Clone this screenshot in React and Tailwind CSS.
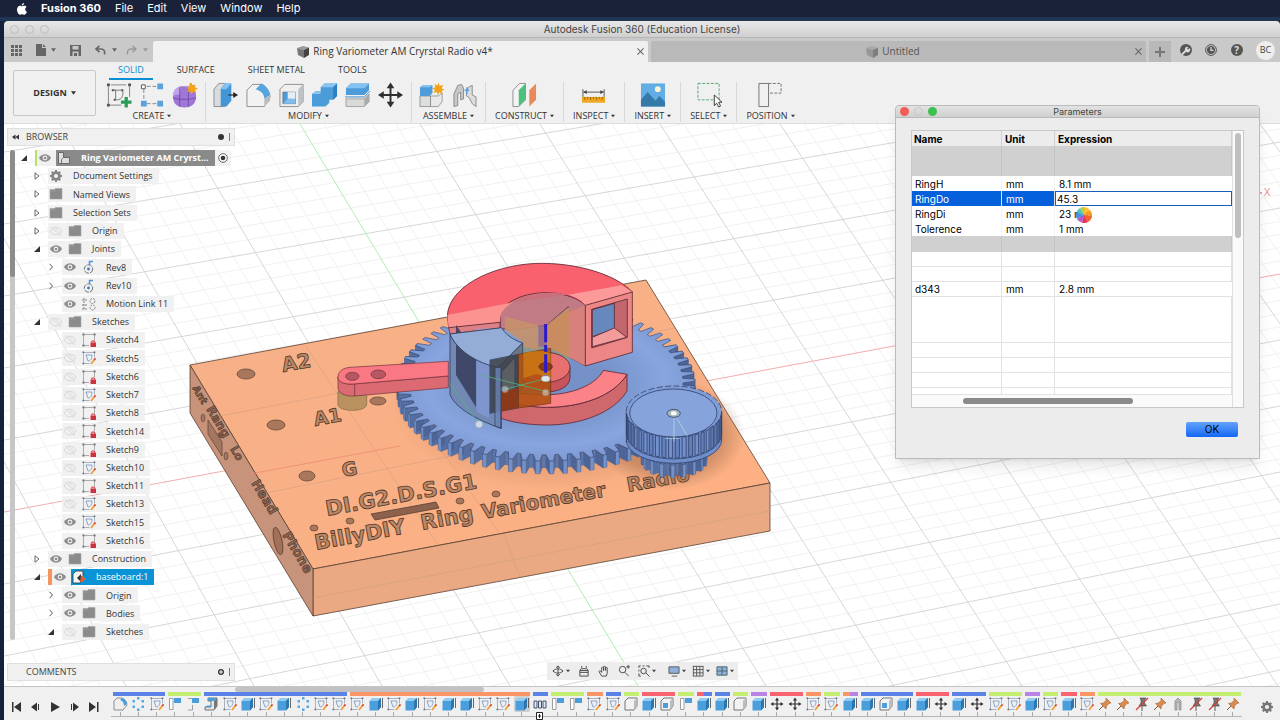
import React, { useState } from 'react';

const COLORS = {
  blue: 'bg-[#5b82e6]',
  lime: 'bg-[#c3ee70]',
  orange: 'bg-[#fb9565]',
  red: 'bg-[#f8636f]',
  purple: 'bg-[#b983e6]',
  redBlue: 'bg-linear-to-r from-[#f8636f] from-50% to-[#5b82e6] to-50%',
  orangePurple: 'bg-linear-to-r from-[#fb9565] from-50% to-[#b983e6] to-50%',
};

const TIMELINE = [
  { color: 'blue', items: ['fillet', 'pattern', 'sketch'] },
  { color: 'lime', items: ['joint', 'jointAlt'] },
  { color: 'blue', items: ['sweep', 'sketch', 'extrude', 'sketch', 'extrude', 'pattern', 'sketch', 'sketch'] },
  { color: 'orange', items: ['sketch', 'extrude', 'sketch', 'extrude', 'sketch', 'extrude', 'extrude', 'sketch', 'sketch', 'extrudeActive'] },
  { color: 'blue', items: ['linear'] },
  { color: 'lime', items: ['joint', 'joint'] },
  { color: 'orange', items: ['sketch'] },
  { color: 'blue', items: ['sketch'] },
  { color: 'lime', items: ['body'] },
  { color: 'red', items: ['extrude', 'shell'] },
  { color: 'lime', items: ['joint'] },
  { color: 'redBlue', items: ['extrude'] },
  { color: 'blue', items: ['extrude'] },
  { color: 'lime', items: ['body'] },
  { color: 'purple', items: ['extrude'] },
  { color: 'red', items: ['move', 'move'] },
  { color: 'orange', items: ['sketch'] },
  { color: 'lime', items: ['sketch'] },
  { color: 'orangePurple', items: ['extrude'] },
  { color: 'blue', items: ['extrude', 'shell', 'extrude'] },
  { color: 'red', items: ['extrude', 'move'] },
  { color: 'blue', items: ['extrude', 'move'] },
  { color: 'lime', items: ['sketch', 'sketch'] },
  { color: 'purple', items: ['extrude'] },
  { color: 'lime', items: ['sketch'] },
  { color: 'red', items: ['extrude'] },
  { color: 'orange', items: ['sketch'] },
  { color: 'lime', items: ['pin', 'pin', 'pinOff', 'pin', 'clip', 'pinOff', 'pinOff', 'pin'] },
];

const TREE = [
  { label: 'Ring Variometer AM Cryrst...', depth: 0, arrow: 'open', eye: 'on', icon: 'component', root: true },
  { label: 'Document Settings', depth: 1, arrow: 'closed', icon: 'gear' },
  { label: 'Named Views', depth: 1, arrow: 'closed', icon: 'folder' },
  { label: 'Selection Sets', depth: 1, arrow: 'closed', icon: 'folder' },
  { label: 'Origin', depth: 1, arrow: 'closed', eye: 'off', icon: 'folder' },
  { label: 'Joints', depth: 1, arrow: 'open', eye: 'on', icon: 'folder' },
  { label: 'Rev8', depth: 2, arrow: 'thin', eye: 'on', icon: 'rev' },
  { label: 'Rev10', depth: 2, arrow: 'thin', eye: 'on', icon: 'rev' },
  { label: 'Motion Link 11', depth: 2, eye: 'on', icon: 'link' },
  { label: 'Sketches', depth: 1, arrow: 'open', eye: 'off', icon: 'folder' },
  { label: 'Sketch4', depth: 2, eye: 'off', icon: 'locked' },
  { label: 'Sketch5', depth: 2, eye: 'off', icon: 'sketch' },
  { label: 'Sketch6', depth: 2, eye: 'off', icon: 'locked' },
  { label: 'Sketch7', depth: 2, eye: 'off', icon: 'sketch' },
  { label: 'Sketch8', depth: 2, eye: 'off', icon: 'locked' },
  { label: 'Sketch14', depth: 2, eye: 'off', icon: 'locked' },
  { label: 'Sketch9', depth: 2, eye: 'off', icon: 'locked' },
  { label: 'Sketch10', depth: 2, eye: 'off', icon: 'sketch' },
  { label: 'Sketch11', depth: 2, eye: 'off', icon: 'locked' },
  { label: 'Sketch13', depth: 2, eye: 'off', icon: 'sketch' },
  { label: 'Sketch15', depth: 2, eye: 'on', icon: 'sketch' },
  { label: 'Sketch16', depth: 2, eye: 'on', icon: 'locked' },
  { label: 'Construction', depth: 1, arrow: 'closed', eye: 'on', icon: 'folder' },
  { label: 'baseboard:1', depth: 1, arrow: 'open', eye: 'on', icon: 'part', selected: true },
  { label: 'Origin', depth: 2, arrow: 'thin', eye: 'on', icon: 'folder' },
  { label: 'Bodies', depth: 2, arrow: 'thin', eye: 'on', icon: 'folder' },
  { label: 'Sketches', depth: 2, arrow: 'open', eye: 'off', icon: 'folder' },
];

const INDENT = ['pl-[2px]', 'pl-[15px]', 'pl-[29px]'];

const RIBBON = [
  { label: 'CREATE', icons: ['newSketch', 'pointPattern', 'form'] },
  { label: 'MODIFY', icons: ['pressPull', 'filletBig', 'shellBig', 'combine', 'split', 'moveBig'] },
  { label: 'ASSEMBLE', icons: ['newComponent', 'jointBig'] },
  { label: 'CONSTRUCT', icons: ['plane'] },
  { label: 'INSPECT', icons: ['measure'] },
  { label: 'INSERT', icons: ['picture'] },
  { label: 'SELECT', icons: ['select'] },
  { label: 'POSITION', icons: ['position'] },
];

const Caret = ({ className = 'w-[5px] h-[4px]' }) => (
  <svg className={className} viewBox="0 0 6 4" fill="currentColor">
    <path d="M0 0h6L3 4z" />
  </svg>
);

const GEAR_PATH =
  'M6.8 0h2.4l.4 2 1.5.6L12.8 1.5l1.7 1.7-1.1 1.7.6 1.5 2 .4v2.4l-2 .4-.6 1.5 1.1 1.7-1.7 1.7-1.7-1.1-1.5.6-.4 2H6.8l-.4-2-1.5-.6-1.7 1.1-1.7-1.7 1.1-1.7L2 9.6l-2-.4V6.8l2-.4.6-1.500L1.500 3.200l1.700-1.700 1.700 1.100L6.400 2zM8 5.200a2.800 2.800 0 100 5.600 2.800 2.800 0 000-5.600z';

const GearIcon = ({ className }) => (
  <svg className={className} viewBox="0 0 16 16" fill="currentColor">
    <path fillRule="evenodd" d={GEAR_PATH} />
  </svg>
);

/* ---------- ribbon icons ---------- */

const ribbonDrawings = {
  newSketch: (
    <g fill="none" stroke="#777">
      <path d="M2.500 4v18M4 23.500h12M5 2.500h16M24.500 4v11" strokeWidth=".9" />
      <path d="M7 8h10c2 5-1 10-5 10H9M7 8h3v9" strokeWidth="1" />
      <path d="M1 1h3v3H1zM23 1h3v3h-3zM1 22h3v3H1zM6 7h2v2H6zM16 7h2v2h-2zM8 17h2v2H8z" fill="#555" stroke="none" />
      <path d="M21 15v11M15.500 20.500h11" stroke="#2a9d58" strokeWidth="3.400" />
    </g>
  ),
  pointPattern: (
    <g>
      <path d="M5 7v12M8 4h10M8 22h10" stroke="#888" strokeDasharray="4 2" fill="none" />
      <path d="M2.500 2.500h4v4h-4z" fill="#fff" stroke="#555" />
      <path d="M19 1h6v6h-6zM2 19h6v6H2zM19 19h6v6h-6z" fill="#5aa2dc" />
    </g>
  ),
  form: (
    <g>
      <path d="M1 15c0-6 3-9 8-11h8c6 2 8 5 8 11 0 6-4 11-12 11S1 21 1 15z" fill="#a077d6" />
      <path d="M1 14c2-1 4-1.500 7-1l1-9C4 5 1 9 1 14z" fill="#c3a3ec" />
      <path d="M8 5v20M1 16c5 2 18 2 24 0M17 5v20" stroke="#6f48a8" fill="none" strokeWidth=".9" />
      <path d="M20 0l1.500 3 3-1-.8 3 3.300 1.200-3 1.700 1 3-3-1.200-2 2.800-1-3.200-3.200.6 1.400-3L15 5.200l3.200-.7-.4-3z" fill="#f0a316" />
    </g>
  ),
  pressPull: (
    <g>
      <path d="M1 7l5-6h6v24H1z" fill="#d9dcdf" stroke="#6a6a6a" strokeWidth=".7" />
      <path d="M8 7l4-6h7v18l-5 6H8z" fill="#4296d6" />
      <path d="M8 7l4-6h7l-5 6z" fill="#85c1ee" />
      <path d="M16 13h6" stroke="#222" strokeWidth="1.200" />
      <path d="M21 10l5 3-5 3z" fill="#222" />
    </g>
  ),
  filletBig: (
    <g>
      <path d="M1 8l6-6h9c5 2 9 8 9 13l-6 10H1z" fill="#f2f2f2" stroke="#777" strokeWidth=".8" />
      <path d="M10 7l6-6c5 2 8 7 9 12l-6 4c0-5-3-8-9-10z" fill="#56a5de" />
      <path d="M19 17l6-4v6l-6 6z" fill="#b9bcbf" />
    </g>
  ),
  shellBig: (
    <g>
      <path d="M1 7l5-5h19v18l-5 5H1z" fill="#f0f0f0" stroke="#777" strokeWidth=".8" />
      <path d="M20 7l5-5v18l-5 5z" fill="#bfc2c5" />
      <path d="M4 10h13v12H4z" fill="#4d9cda" stroke="#555" strokeWidth=".6" />
      <path d="M9 10h8v7H9z" fill="#e6eef5" />
      <path d="M4 22l5-5h8v5z" fill="#80bdec" />
    </g>
  ),
  combine: (
    <g>
      <path d="M9 5l4-4h13v13l-4 4h-4v3l-4 4H0V12l4-3h5z" fill="#4d9cda" />
      <path d="M9 5l4-4h13l-4 4zM0 12l4-3h5v3z" fill="#8ac5f0" />
      <path d="M22 5l4-4v13l-4 4z" fill="#2f7fc0" />
    </g>
  ),
  split: (
    <g>
      <path d="M1 6l5-5h19v7l-5 5H1z" fill="#4d9cda" />
      <path d="M1 6l5-5h19l-5 5z" fill="#86c2ef" />
      <path d="M0 15h20l6-6" stroke="#3a8ac9" fill="none" />
      <path d="M1 17h19l5-5v8l-5 5H1z" fill="#d9dad8" stroke="#888" strokeWidth=".7" />
      <path d="M20 17l5-5v8l-5 5z" fill="#a9acab" />
    </g>
  ),
  moveBig: (
    <g fill="#2f2f2f">
      <path d="M12 5h2v16h-2zM5 12h16v2H5z" />
      <path d="M13 0l4 6H9zM13 26l4-6H9zM0 13l6-4v8zM26 13l-6-4v8z" />
    </g>
  ),
  newComponent: (
    <g>
      <path d="M1 14h11v11H1z" fill="#dcdddd" stroke="#777" strokeWidth=".7" />
      <path d="M12 14h8l4-3v9l-4 5h-8z" fill="#e9e9e9" stroke="#777" strokeWidth=".7" />
      <path d="M1 5l3-2h10v8l-3 3H1z" fill="#4d9cda" />
      <path d="M1 5l3-2h10l-3 2z" fill="#8ac5f0" />
      <path d="M20 0l1.500 3.500 3.500-1-1.500 3.500 3 1.500-3 1 1 3.500-3.200-1.800L19.500 13l-1-3.200-3.500 1 1.500-3.200-3-1.600 3.500-1-.8-3.500 3 1.700z" fill="#f0a316" />
    </g>
  ),
  jointBig: (
    <g stroke="#777" strokeWidth=".8">
      <path d="M2 12l4-9 4-1 2 4v11l-3 1V10l-3 2v12l-4 1z" fill="#c6c8ca" />
      <path d="M15 14V9l2-4 4-2v10l4 2v10l-4-3-3-6z" fill="#dcdedf" />
      <path d="M13 8h5M15.500 5v7" stroke="#4d9cda" strokeWidth="1.400" />
    </g>
  ),
  plane: (
    <g>
      <path d="M1 8l7-7h6v17l-7 7H1z" fill="#f3f3f3" stroke="#777" strokeWidth=".8" />
      <path d="M7 8l7-7v17l-7 7z" fill="#4cc07c" />
      <path d="M18 8l7-7v17l-7 7z" fill="#e8895a" />
    </g>
  ),
  measure: (
    <g>
      <path d="M2 7v8M24 7v8M3 10h20" stroke="#555" fill="none" />
      <path d="M2 10l4-2v4zM24 10l-4-2v4z" fill="#444" />
      <path d="M1 15h24v6H1z" fill="#efa51f" />
      <path d="M4 15v3M7 15v2M10 15v3M13 15v2M16 15v3M19 15v2M22 15v3" stroke="#7d5200" strokeWidth=".8" />
    </g>
  ),
  picture: (
    <g>
      <path d="M1 1h25v24H1z" fill="#62ade6" />
      <circle cx="18.500" cy="7" r="3" fill="#fdf3d3" />
      <path d="M1 18l7-8 8 9 4-5 6 6v5H1z" fill="#3579a8" />
    </g>
  ),
  select: (
    <g>
      <path d="M2 1h22v17H2z" fill="none" stroke="#43a06c" strokeWidth=".9" strokeDasharray="3 1.500" />
      <path d="M19 13v11l2.500-2.500 2 4 2-1-2-4H27z" fill="#fff" stroke="#222" strokeWidth=".9" />
    </g>
  ),
  position: (
    <g fill="none" stroke="#666" strokeWidth=".9">
      <path d="M2 1h10v24H2z" />
      <path d="M12 1h13v10H12" strokeDasharray="3 1.500" />
    </g>
  ),
};

const RibbonIcon = ({ name }) => (
  <svg className="w-[26px] h-[26px]" viewBox="0 0 27 26">
    {ribbonDrawings[name]}
  </svg>
);

/* ---------- 16px icons shared by the browser tree and the timeline ---------- */

const smallDrawings = {
  folder: <path d="M2 3.500h4.500l1-1H14V13H2zM2 5h6" fill="#8b8b8b" stroke="#a5a5a5" strokeWidth=".6" />,
  component: (
    <g fill="#ddd" stroke="#555" strokeWidth=".8">
      <path d="M2.500 2.500h5v5h6v6h-11z" />
      <path d="M7.500 7.500l-2 2v4" fill="none" />
    </g>
  ),
  part: (
    <g>
      <path d="M2 5l3-3h7v8l-3 4H2z" fill="#f4f4f4" stroke="#333" strokeWidth=".8" />
      <path d="M10 5v8l-4-4z" fill="#333" />
      <path d="M10 7h3v2h2v2h-2v2H9z" fill="#d8603a" />
    </g>
  ),
  rev: (
    <g fill="none">
      <circle cx="7.500" cy="10" r="4.200" stroke="#666" strokeWidth=".9" strokeDasharray="5 1" />
      <circle cx="7.500" cy="10" r="1.400" fill="#3c78c8" />
      <path d="M8.500 6V2.500h3.500" stroke="#4f97dc" strokeWidth="1.500" />
    </g>
  ),
  link: (
    <g fill="none" stroke="#777" strokeWidth=".9" strokeDasharray="2 1">
      <path d="M3 2v12M6 4H1M6 9H1M6 13H1" />
      <circle cx="11.500" cy="5" r="2.500" />
      <circle cx="11.500" cy="11.500" r="2.500" />
    </g>
  ),
  locked: (
    <g>
      <path d="M2.500 12V4M4 2.500h8M13.500 4v4M4 13.500h4" fill="none" stroke="#999" strokeWidth=".8" />
      <path d="M1.500 1.500h2v2h-2zM12.500 1.500h2v2h-2zM1.500 12.500h2v2h-2z" fill="#666" />
      <path d="M9.500 10.500h5.500V15H9.500z" fill="#cc3340" />
      <path d="M10.800 10.500V9h2.800v1.500" fill="none" stroke="#cc3340" />
    </g>
  ),
  sketch: (
    <g fill="none">
      <path d="M2.500 2.500h11v5M2.500 2.500v11h6" stroke="#96a5b8" strokeWidth=".8" />
      <path d="M5 5h6c0 4-1.500 6-4 6M5 5l2 6" stroke="#6d93c2" strokeWidth=".8" />
      <path d="M1.500 1.500h1.600v1.600H1.500zM12.700 1.500h1.600v1.600h-1.600zM1.500 12.700h1.600v1.600H1.500z" fill="#667" />
      <path d="M10 14l3.500-4.500" stroke="#f0a03a" strokeWidth="1.900" />
      <path d="M13.200 10l1.300-1.600" stroke="#cf4a34" strokeWidth="1.800" />
    </g>
  ),
  extrude: (
    <g>
      <path d="M1.500 5l3-3H13v9l-3 3.500H1.500z" fill="#4a9edb" />
      <path d="M1.500 5l3-3H13l-3 3z" fill="#93ccf3" />
      <path d="M10 5l3-3v9l-3 3.500z" fill="#2c75ad" />
      <path d="M14.500 2v10" stroke="#444" strokeWidth=".8" />
    </g>
  ),
  body: (
    <g>
      <path d="M2 5l3-3h9v8l-3 4H2z" fill="#f2f2f2" stroke="#666" strokeWidth=".9" />
      <path d="M11 5l3-3v8l-3 4z" fill="#bcbcbc" />
    </g>
  ),
  shell: (
    <g>
      <path d="M2 5l3-3h9v8l-3 4H2z" fill="#f2f2f2" stroke="#666" strokeWidth=".9" />
      <path d="M11 5l3-3v8l-3 4z" fill="#bcbcbc" />
      <path d="M4 7h5v5H4z" fill="#4a9edb" />
    </g>
  ),
  fillet: (
    <g>
      <path d="M2 5l3-3h5c3 1 5 4 5 7l-4 5H2z" fill="#eee" stroke="#777" strokeWidth=".8" />
      <path d="M8 4l2-2c3 1 5 4 5 6l-3 2c0-3-1-5-4-6z" fill="#4a9edb" />
    </g>
  ),
  sweep: (
    <g>
      <path d="M5 2h9v8l-3 4H2v-3h6V5H5z" fill="#e7e7e7" stroke="#555" strokeWidth=".8" />
      <path d="M5 2h9l-3 3H5zM2 11l2-1.500h4V11z" fill="#4a9edb" />
      <path d="M11 5l3-3v8l-3 4z" fill="#777" />
    </g>
  ),
  pattern: (
    <g fill="#5aa6de">
      <path d="M7 1h2.500v2.500H7zM7 12.500h2.500V15H7zM2.500 4H5v2.500H2.500zM11.500 4H14v2.500h-2.500zM2.500 9.500H5V12H2.500zM11.500 9.500H14V12h-2.500z" />
    </g>
  ),
  linear: <path d="M2 5h3v7H2zM6.500 5h3v7h-3zM11 5h3v7h-3z" fill="#dfe9f5" stroke="#33415e" strokeWidth=".9" />,
  joint: (
    <g>
      <path d="M2.500 2.500h3.500v11H2.500z" fill="#fff" stroke="#888" strokeWidth=".8" />
      <path d="M7 2h7v5H7z" fill="#4a9edb" />
    </g>
  ),
  jointAlt: (
    <g>
      <path d="M3 2.500h4M7.500 9v5H3" fill="none" stroke="#888" strokeWidth=".8" />
      <path d="M7 2h7v5H7z" fill="#4a9edb" />
    </g>
  ),
  move: (
    <g fill="#2f2f2f">
      <path d="M7.400 3h1.200v10H7.400zM3 7.400h10v1.200H3z" />
      <path d="M8 1.500l2 3H6zM8 14.500l2-3H6zM1.500 8l3-2v4zM14.500 8l-3-2v4z" />
    </g>
  ),
  pin: (
    <g>
      <path d="M9 2l5 5-2 .5-2.500 2.500L9 13 3.500 7.500l3-.5L9 4.500z" fill="#d98a4e" stroke="#a5622d" strokeWidth=".6" />
      <path d="M6 10l-4 4" stroke="#7a5636" />
    </g>
  ),
  pinOff: (
    <g>
      <path d="M6 2h6l-1.500 2v3l2 3H5l2-3V4z" fill="#777" stroke="#444" strokeWidth=".6" />
      <path d="M8 10v5" stroke="#555" />
      <path d="M2 14L14 2" stroke="#c94434" strokeWidth="1.200" />
    </g>
  ),
  clip: <path d="M5 14V5l3-3 3 3v9H9V6H7v8z" fill="#bbb" stroke="#888" strokeWidth=".8" />,
};

const SmallIcon = ({ name }) => {
  if (name === 'gear') return <GearIcon className="w-4 h-3 shrink-0 text-[#858585]" />;
  return (
    <svg className="w-4 h-4 shrink-0" viewBox="0 0 16 16">
      {smallDrawings[name]}
    </svg>
  );
};

const EyeIcon = ({ on }) => (
  <svg className="w-4 h-4 shrink-0" viewBox="0 0 16 16" fill="none">
    {on ? (
      <>
        <path d="M2 8c3-5 9-5 12 0-3 5-9 5-12 0z" fill="#8d8d8d" />
        <circle cx="8" cy="8" r="2.400" fill="#f0f0f0" />
        <circle cx="8" cy="8" r="1.300" fill="#8d8d8d" />
      </>
    ) : (
      <path d="M2 8c3-5 9-5 12 0-3 5-9 5-12 0zM3 4l10 9M6 3.500l7 7" stroke="#d8d8d8" />
    )}
  </svg>
);

const TreeArrow = ({ kind }) => (
  <span className="w-[14px] mr-1 flex justify-center shrink-0">
    {kind && (
      <svg className="w-[8px] h-[8px]" viewBox="0 0 8 8">
        {kind === 'open' && <path d="M7 1v6H1z" fill="#333" />}
        {kind === 'closed' && <path d="M2 .8v6.400L6 4z" fill="#fff" stroke="#444" strokeWidth=".8" />}
        {kind === 'thin' && <path d="M2.500.8L5.500 4l-3 3.200" fill="none" stroke="#444" strokeWidth=".9" />}
      </svg>
    )}
  </span>
);

const TreeRow = ({ row }) => {
  let chip = 'flex items-center h-4 bg-[#f0f0f0]/90';
  if (row.root) chip += ' border-l-2 border-[#b5e36a]';
  if (row.selected) chip += ' border-l-4 border-[#f5945f]';

  let name = 'flex items-center h-4 pr-[6px] gap-[9px]';
  if (row.eye) name += ' ml-[3px]';
  if (row.root) name += ' bg-[#8a8a8a] text-white font-bold';
  if (row.selected) name += ' bg-[#0a93d6] text-white';

  return (
    <li className={`flex items-center ${INDENT[row.depth]}`}>
      <TreeArrow kind={row.arrow} />
      <div className={chip}>
        {row.eye && <EyeIcon on={row.eye === 'on'} />}
        <button type="button" className={name}>
          <SmallIcon name={row.icon} />
          {row.label}
        </button>
        {row.root && (
          <svg className="w-[10px] h-[10px] mx-[3px]" viewBox="0 0 10 10">
            <circle cx="5" cy="5" r="4.300" fill="#fff" stroke="#555" strokeWidth=".9" />
            <circle cx="5" cy="5" r="2.300" fill="#333" />
          </svg>
        )}
      </div>
    </li>
  );
};

/* ---------- 3D viewport ---------- */

const gearPoints = (cx, cy, rx, ry, teeth, depth) => {
  const pts = [];
  const shape = [[0, 1 - depth], [0.3, 1 - depth], [0.45, 1], [0.75, 1]];
  for (let i = 0; i < teeth; i++) {
    shape.forEach(([t, r]) => {
      const a = ((i + t) / teeth) * Math.PI * 2;
      pts.push([cx + rx * r * Math.cos(a), cy + ry * r * Math.sin(a)]);
    });
  }
  return pts;
};

const SIDE_SHADES = ['#5d78ae', '#566fa3', '#7391ca', '#4d6496'];

const Gear = ({ cx, cy, rx, ry, teeth, depth, height, fill }) => {
  const pts = gearPoints(cx, cy, rx, ry, teeth, depth);
  const sides = pts
    .map((p, i) => ({ p, q: pts[(i + 1) % pts.length], shade: i % 4 }))
    .filter(({ p }) => p[1] > cy - ry * 0.5)
    .sort((a, b) => a.p[1] - b.p[1]);
  return (
    <g strokeLinejoin="round">
      {sides.map(({ p, q, shade }, i) => (
        <path
          key={i}
          d={`M${p[0]} ${p[1]}L${q[0]} ${q[1]}v${height}L${p[0]} ${p[1] + height}z`}
          fill={SIDE_SHADES[shade]}
          stroke="#42557f"
          strokeWidth=".3"
        />
      ))}
      <path d={`M${pts.map((p) => p.join(' ')).join('L')}z`} fill={fill} stroke="#33456c" strokeWidth=".6" />
    </g>
  );
};

const Grid = () => {
  const minor = [];
  const major = [];
  for (let i = -40; i <= 40; i++) {
    const k = i / 5;
    const line = { key: `a${i}`, x1: 4, y1: 512 + 72 * k, x2: 1280, y2: 274 + 66 * k };
    if (i === 0) major.push({ ...line, stroke: '#f3a3a3' });
    else if (i % 5 === 0) major.push({ ...line, stroke: '#d2d2d2' });
    else minor.push({ ...line, stroke: '#efefef' });
  }
  for (let i = -30; i <= 50; i++) {
    const k = i / 5;
    const line = { key: `b${i}`, x1: 300 + 120 * k, y1: 124, x2: 638 + 128 * k, y2: 686 };
    if (i === 0) major.push({ ...line, stroke: '#a5eda5' });
    else if (i % 5 === 0) major.push({ ...line, stroke: '#d2d2d2' });
    else minor.push({ ...line, stroke: '#efefef' });
  }
  return (
    <g strokeWidth=".9">
      {[...minor, ...major].map(({ key, ...line }) => (
        <line key={key} {...line} />
      ))}
    </g>
  );
};

const HOLES = [
  [246, 374, 9, 5], [276, 425, 9, 5], [307, 476, 8, 5], [378, 401, 8, 4],
  [314, 528, 4, 3], [350, 521, 4, 3], [460, 501, 4, 3], [496, 494, 4, 3],
];

const TOP_LABELS = [
  { text: 'A2', x: 283, y: 372, size: 20 },
  { text: 'A1', x: 315, y: 426, size: 19 },
  { text: 'G', x: 343, y: 477, size: 19 },
  { text: 'DI.G2.D.S.G1', x: 327, y: 516, size: 21 },
  { text: 'BillyDIY', x: 316, y: 550, size: 21 },
  { text: 'Ring', x: 422, y: 530, size: 21 },
  { text: 'Variometer', x: 483, y: 519, size: 20 },
  { text: 'Radio', x: 628, y: 492, size: 20 },
];

const SIDE_LABELS = [
  { text: 'Ant', x: 192, y: 388, size: 10 },
  { text: 'Rang', x: 206, y: 409, size: 12 },
  { text: 'Lo', x: 230, y: 449, size: 11 },
  { text: 'Head', x: 251, y: 483, size: 13 },
  { text: 'Phone', x: 282, y: 535, size: 13 },
];

const Baseboard = () => (
  <g stroke="#5a4032" strokeWidth=".8" strokeLinejoin="round">
    <path d="M190 365L646 280L770 483L313 569z" fill="url(#boardTop)" />
    <path d="M313 569L770 483V531L313 616z" fill="#eaa983" />
    <path d="M190 365L313 569V616L190 413z" fill="#c7937a" />
    <g stroke="#c49a80" strokeWidth=".6" fill="none" opacity=".7">
      <path d="M220 416L675 328M266 493L720 402M305 345L438 545M390 376L500 534M313 598L770 511M504 534L520 577" />
    </g>
    <path d="M250 474L400 446" stroke="#ee8a76" strokeWidth=".8" />
    {HOLES.map(([x, y, rx, ry]) => (
      <ellipse key={`${x}-${y}`} cx={x} cy={y} rx={rx} ry={ry} fill="#a9785c" strokeWidth=".7" />
    ))}
    <path d="M371 514L436 502L439 508L375 520z" fill="#8c624d" />
    <path d="M208 420l14 22v14l-14-22z" fill="#a57763" strokeWidth=".7" />
    <ellipse cx="203" cy="418" rx="2" ry="4" fill="#a57763" strokeWidth=".6" />
    <ellipse cx="226" cy="456" rx="2" ry="4" fill="#a57763" strokeWidth=".6" />
    <ellipse cx="278" cy="541" rx="4" ry="14" transform="rotate(-12 278 541)" fill="#a3715a" />
    <g fontFamily="'DejaVu Sans', sans-serif" fontWeight="700" fill="#bd8765" stroke="#4d372b" strokeWidth=".8">
      {TOP_LABELS.map(({ text, x, y, size }) => (
        <text key={text} x={x} y={y} fontSize={size} transform={`rotate(-10.500 ${x} ${y})`}>{text}</text>
      ))}
    </g>
    <g fontFamily="'DejaVu Sans', sans-serif" fontWeight="700" fill="#8f6552" stroke="#4d372b" strokeWidth=".6">
      {SIDE_LABELS.map(({ text, x, y, size }) => (
        <text key={text} x={x} y={y} fontSize={size} transform={`rotate(59 ${x} ${y})`}>{text}</text>
      ))}
    </g>
  </g>
);

const Arm = () => (
  <g transform="translate(180 250) scale(.33333)" stroke="#6b3038" strokeWidth="2">
    <path d="M474 425v38c0 24 86 24 86 0v-38z" fill="#b9925f" stroke="#7d6342" />
    <path d="M474 380C472 394 490 404 520 402L805 378V413L525 438C495 440 476 430 474 415z" fill="#db6a73" />
    <path d="M510 352L805 334V378L520 402C490 404 472 394 474 380C476 362 490 354 510 352z" fill="#fa7883" />
    <path d="M524 402V438" />
    <ellipse cx="517" cy="379" rx="20" ry="12" fill="#b75761" />
    <ellipse cx="595" cy="373" rx="22" ry="13" fill="#b75761" />
  </g>
);

const Ring = () => (
  <g transform="translate(400 250) scale(.33333)" stroke="#5d2a35" strokeWidth="2.500" strokeLinejoin="round">
    {/* inner hub */}
    <path d="M345 330C350 290 390 276 437 276C480 276 510 284 510 290V330L480 345z" fill="#8f9a86" stroke="none" opacity=".8" />
    <path d="M365 352V380C370 440 505 440 510 385V352z" fill="#c8535b" />
    <ellipse cx="437" cy="352" rx="73" ry="45" fill="#e8716f" />

    {/* hole wall seen through the ring */}
    <path d="M300 200C305 160 360 128 435 128C500 128 545 150 556 166V348L510 322L505 170L440 226L330 240L300 235z" fill="#c07b85" />
    <path d="M315 200L415 226V300L368 290V275L315 240z" fill="#c8916a" stroke="none" opacity=".9" />
    <path d="M440 226L507 172V322L440 290z" fill="#c98b60" stroke="none" />
    <path d="M507 185L556 166V348L507 322z" fill="#d8807c" stroke="none" />
    <path d="M415 226H440V290H415z" fill="#9a6f86" stroke="none" />

    {/* top face */}
    <path d="M142 195C150 100 300 38 430 40C560 42 660 85 697 126L556 166C530 140 480 127 435 128C360 130 305 160 300 200V217L146 233z" fill="#f8616d" />
    <path d="M142 195L340 157C312 172 300 188 300 217L146 233z" fill="#fd9390" stroke="none" />
    <path d="M505 134L665 106L697 126L556 166C545 150 525 140 505 134z" fill="#fc9a99" stroke="none" />
    <path d="M340 157L505 134C450 122 370 130 340 157z" fill="#c9707c" stroke="none" />
    <path d="M146 233L300 217V235L150 252z" fill="#dd8086" />

    {/* end face with the window */}
    <path d="M556 166L697 126V307L556 348z" fill="#ec8786" />
    <path d="M575 178L682 147V262L575 294z" fill="#c2666d" />
    <path d="M577 179L643 160V236L577 260z" fill="#6788bd" />
    <path d="M577 290V262L643 234L680 262z" fill="#f29c9b" />

    {/* lower arc */}
    <path d="M681 373V423C640 490 540 525 440 525C380 525 330 515 303 505V440C350 465 400 472 440 472C540 472 640 440 681 373z" fill="#cf686c" />
    <path d="M610 361L681 373C640 440 540 472 440 472C390 472 330 460 300 440L305 415C350 430 400 437 450 434C530 430 590 400 610 361z" fill="#fb8388" />

    {/* glass block */}
    <g stroke="#2f3d5c">
      <path d="M150 252C170 300 230 340 295 352L303 535C230 510 160 470 150 432z" fill="#7289b6" />
      <path d="M168 225L228 310V472L168 375z" fill="#363d5b" opacity=".85" stroke="none" />
      <path d="M230 235h37v270l-37-18z" fill="#8ea7e8" opacity=".45" stroke="none" />
      <path d="M150 252L305 233C315 253 340 270 368 279L295 352C230 340 170 300 150 252z" fill="#94add6" />
      <path d="M295 352L368 279V420L303 450V535z" fill="#6d7788" />
      <path d="M270 330L355 313V474L270 490z" fill="#3d4148" opacity=".85" />
      <path d="M305 365L345 322V418L305 428z" fill="#5c5f62" />
      <path d="M355 313L452 295V460L355 474z" fill="#b0500f" opacity=".88" stroke="#6b3410" />
      <path d="M370 310C400 300 440 300 452 312V385L410 372L370 385z" fill="#cc7a14" opacity=".8" stroke="none" />
      <path d="M303 425L355 415V474L303 484z" fill="#8a3a18" stroke="none" />
      <path d="M285 352H303V535L285 528z" fill="#6b84b5" opacity=".8" />
    </g>
    <ellipse cx="437" cy="350" rx="20" ry="12" fill="#8a3d12" />
    <path d="M437 222V385" stroke="#2b18cf" strokeWidth="9" strokeDasharray="55 8 20 8" />
    <path d="M150 400L237 523M245 375L440 425M315 418L437 386" stroke="#55b07e" fill="none" />
    <g fill="#dfe6ea" stroke="#9aa" strokeWidth="2">
      <ellipse cx="437" cy="386" rx="13" ry="9" />
      <circle cx="437" cy="428" r="10" opacity=".5" />
      <circle cx="315" cy="418" r="10" opacity=".5" />
      <circle cx="237" cy="523" r="11" opacity=".8" />
    </g>
  </g>
);

const rimPoint = (t) => [822 + 143 * Math.cos(t * Math.PI), 487 + 75 * Math.sin(t * Math.PI)];

const Pinion = () => {
  const ribs = [];
  for (let i = 0; i < 22; i++) {
    const [x1, y1] = rimPoint((i + 0.2) / 22);
    const [x2, y2] = rimPoint((i + 0.8) / 22);
    ribs.push(<path key={i} d={`M${x1} ${y1}L${x2} ${y2}v62L${x1} ${y1 + 62}z`} fill={i % 2 ? '#7390cb' : '#6480ba'} />);
  }
  return (
    <g>
      <Gear cx={674} cy={449} rx={33} ry={16} teeth={18} depth={0.16} height={13} fill="#6784bb" />
      <g transform="translate(400 250) scale(.33333)" stroke="#33456c" strokeWidth="2.500">
        <path d="M679 485V570A143 70 0 00965 570V485z" fill="#6f8ecb" />
        <path d="M679 552A143 75 0 00965 552" fill="none" />
        <ellipse cx="822" cy="484" rx="143" ry="76" fill="#7f9cd6" strokeDasharray="18 7" />
        {ribs}
        <ellipse cx="820" cy="489" rx="131" ry="72" fill="#87a3dc" />
        <path d="M822 490L862 558M822 490V575M795 565H840" stroke="#bfe3dd" strokeWidth="2" />
        <ellipse cx="821" cy="490" rx="20" ry="12" fill="#9fb5b8" />
        <ellipse cx="821" cy="490" rx="9" ry="6" fill="#fff" stroke="none" />
      </g>
    </g>
  );
};

const Viewport = () => (
  <svg className="absolute inset-0 w-full h-full" viewBox="4 124 1276 562" preserveAspectRatio="xMidYMid slice">
    <defs>
      <linearGradient id="boardTop" x1="0" y1="0" x2="1" y2="1">
        <stop offset="0" stopColor="#f5b088" />
        <stop offset="1" stopColor="#feb083" />
      </linearGradient>
      <radialGradient id="gearShadow">
        <stop offset=".7" stopColor="#8a5a3c" stopOpacity=".4" />
        <stop offset="1" stopColor="#8a5a3c" stopOpacity="0" />
      </radialGradient>
      <radialGradient id="gearFace">
        <stop offset=".4" stopColor="#7591c8" />
        <stop offset=".8" stopColor="#89a5df" />
        <stop offset="1" stopColor="#7d9ad4" />
      </radialGradient>
    </defs>
    <Grid />
    <Baseboard />
    <ellipse cx="670" cy="435" rx="75" ry="55" fill="url(#gearShadow)" opacity=".9" />
    <ellipse cx="550" cy="400" rx="160" ry="90" fill="url(#gearShadow)" opacity=".5" />
    <Gear cx={546} cy={383} rx={149} ry={78} teeth={68} depth={0.08} height={13} fill="url(#gearFace)" />
    <Arm />
    <Ring />
    <Pinion />
    <text x="1264" y="196" fontSize="11" fontFamily="'Open Sans', sans-serif" fill="#ee8d8d">X</text>
    <path d="M1258 193h4" stroke="#ee8d8d" strokeWidth="1.500" />
  </svg>
);

/* ---------- window chrome ---------- */

const MenuBar = () => (
  <nav className="h-[21px] bg-[#1a2239] border-b-4 border-[#1e3553] flex items-center pl-[17px] gap-[14px] text-[11px] text-white font-['Inter',sans-serif]">
    <svg className="w-[10px] h-[12px]" viewBox="0 0 20 24" fill="currentColor">
      <path d="M14 0c.2 2.500-2 5-4.500 5C9.300 2.600 11.600.2 14 0zM10 6.500c1 0 2.500-1.200 4.700-1.200 1.800 0 3.500 1 4.500 2.500-4 2.300-3.300 8 .8 9.600-1 2.800-3.200 6.300-5.500 6.300-1.700 0-2.200-1-4.200-1s-2.600 1-4.200 1C3 23.700 0 18 0 13.200 0 8 3.300 5.400 6 5.400c2 0 3.200 1.100 4 1.100z" />
    </svg>
    <button type="button" className="font-bold">Fusion 360</button>
    <button type="button">File</button>
    <button type="button">Edit</button>
    <button type="button">View</button>
    <button type="button">Window</button>
    <button type="button">Help</button>
  </nav>
);

const TitleBar = () => (
  <header className="h-[17px] rounded-t bg-linear-to-b from-[#e8e8e8] to-[#d0d0d0] border-b border-[#b5b5b5] flex items-center px-[6px]">
    <div className="flex-1 flex gap-[6px]">
      <span className="w-[9px] h-[9px] rounded-full border border-[#bdbdbd]" />
      <span className="w-[9px] h-[9px] rounded-full border border-[#bdbdbd]" />
      <span className="w-[9px] h-[9px] rounded-full border border-[#bdbdbd]" />
    </div>
    <h1 className="text-[10px] text-[#444] font-['Inter',sans-serif]">Autodesk Fusion 360 (Education License)</h1>
    <div className="flex-1" />
  </header>
);

const CubeIcon = ({ faded }) => (
  <svg className={faded ? 'w-3 h-3 opacity-50' : 'w-3 h-3'} viewBox="0 0 12 12">
    <path d="M0 2l6-2 6 1.500L7 4z" fill="#999" />
    <path d="M0 2l7 2v8L1 9z" fill="#777" />
    <path d="M7 4l5-2.500V9l-5 3z" fill="#444" />
  </svg>
);

const CloseIcon = () => (
  <svg className="w-[7px] h-[7px]" viewBox="0 0 8 8" stroke="#666" strokeWidth="1.200">
    <path d="M.5.5l7 7M7.500.5l-7 7" />
  </svg>
);

const TabBar = () => (
  <div className="h-6 bg-[#c9c9c9] flex items-stretch text-[#666]">
    <div className="w-[149px] flex items-center pl-[7px] gap-[5px]">
      <button type="button" aria-label="Data panel" className="mr-[9px]">
        <svg className="w-[11px] h-[11px]" viewBox="0 0 11 11" fill="currentColor">
          <path d="M0 0h3v3H0zM4 0h3v3H4zM8 0h3v3H8zM0 4h3v3H0zM4 4h3v3H4zM8 4h3v3H8zM0 8h3v3H0zM4 8h3v3H4zM8 8h3v3H8z" />
        </svg>
      </button>
      <button type="button" aria-label="File" className="flex items-center gap-[5px] mr-[9px]">
        <svg className="w-[10px] h-[12px]" viewBox="0 0 10 12" fill="currentColor">
          <path d="M0 0h6v4h4v8H0zM7 0l3 3H7z" />
        </svg>
        <Caret />
      </button>
      <button type="button" aria-label="Save" className="mr-[9px]">
        <svg className="w-[11px] h-[11px]" viewBox="0 0 11 11" fill="currentColor">
          <path fillRule="evenodd" d="M0 0h11v11H0zM2.500 1v3.500h6V1zM2.500 6.500V11h6V6.500zM4 8h3v3H4z" />
        </svg>
      </button>
      <button type="button" aria-label="Undo" className="flex items-center gap-[6px]">
        <svg className="w-[11px] h-[10px]" viewBox="0 0 11 10" fill="none" stroke="currentColor" strokeWidth="1.600">
          <path d="M4.500.8L1 4l3.500 3.200M1 4h5c3 0 4 2 3.500 5.500" />
        </svg>
        <Caret />
      </button>
      <button type="button" aria-label="Redo" className="flex items-center gap-[6px] ml-1 text-[#999]">
        <svg className="w-[11px] h-[10px]" viewBox="0 0 11 10" fill="none" stroke="currentColor" strokeWidth="1.400">
          <path d="M6.500.8L10 4 6.500 7.200M10 4H5C2 4 1 6 1.500 9.500" />
        </svg>
        <Caret />
      </button>
    </div>
    <div className="flex-1 mt-[3px] mr-[3px] bg-[#f0f0f0] flex items-center pr-1 rounded-t-xs">
      <button type="button" className="flex-1 flex items-center justify-center gap-1 text-[10px] text-[#333]">
        <CubeIcon />
        Ring Variometer AM Cryrstal Radio v4*
      </button>
      <button type="button" aria-label="Close tab"><CloseIcon /></button>
    </div>
    <div className="flex-1 mt-[3px] mr-[3px] bg-[#b9b9b9] flex items-center pr-1 rounded-t-xs">
      <button type="button" className="flex-1 flex items-center justify-center gap-1 text-[10px] text-[#555]">
        <CubeIcon faded />
        Untitled
      </button>
      <button type="button" aria-label="Close tab"><CloseIcon /></button>
    </div>
    <button type="button" aria-label="New tab" className="w-[22px] mt-[3px] bg-[#b9b9b9] flex items-center justify-center">
      <svg className="w-[10px] h-[10px]" viewBox="0 0 10 10" stroke="#777" strokeWidth="2">
        <path d="M5 0v10M0 5h10" />
      </svg>
    </button>
    <div className="w-[109px] flex items-center justify-between pl-[9px] pr-[5px]">
      <button type="button" aria-label="Extensions">
        <svg className="w-3 h-3" viewBox="0 0 12 12">
          <circle cx="6" cy="6" r="6" fill="#555" />
          <path d="M2 10.500l4-4" stroke="#ddd" strokeWidth="1.800" />
          <path d="M5 6A2.500 2.500 0 018.500 3L7 4.600l1 1L9.600 4A2.500 2.500 0 016 7.500z" fill="#ddd" />
        </svg>
      </button>
      <button type="button" aria-label="Job status">
        <svg className="w-3 h-3" viewBox="0 0 12 12" fill="none" stroke="#555">
          <circle cx="6" cy="6" r="5.400" />
          <circle cx="6" cy="6" r="3.600" fill="#555" />
          <path d="M6 3v3.300h2.500" stroke="#ddd" strokeWidth="1.200" />
        </svg>
      </button>
      <button type="button" aria-label="Help" className="w-3 h-3 rounded-full bg-[#555] text-[#ddd] text-[10px] leading-3 font-bold">?</button>
      <button type="button" className="w-[19px] h-[19px] rounded-full bg-[#eee] text-[9px] text-[#444]">BC</button>
    </div>
  </div>
);

const RIBBON_TABS = ['SOLID', 'SURFACE', 'SHEET METAL', 'TOOLS'];

const Ribbon = () => {
  const [tab, setTab] = useState('SOLID');

  return (
    <section className="h-[62px] bg-[#f0f0f0] border-b border-[#ddd] flex text-[9px] text-[#333]">
      <button type="button" className="w-[83px] ml-[9px] mt-2 mb-[7px] border border-[#c8c8c8] rounded-xs font-bold flex items-center justify-center gap-1">
        DESIGN <Caret />
      </button>
      <div className="ml-[3px]">
        <div className="h-[18px] pl-[10px] flex gap-[15px]">
          {RIBBON_TABS.map((t) => (
            <button
              key={t}
              type="button"
              onClick={() => setTab(t)}
              className={`px-[9px] border-b-2 ${t === tab ? 'border-[#0a8fd4] text-[#0a8fd4]' : 'border-transparent'}`}
            >
              {t}
            </button>
          ))}
        </div>
        <div className="flex mt-[2px] h-[40px]">
          {RIBBON.map((group, i) => (
            <div key={group.label} className={`px-[7px] flex flex-col items-center ${i > 0 ? 'border-l border-[#d8d8d8]' : ''}`}>
              <div className="flex gap-[7px]">
                {group.icons.map((icon) => (
                  <button type="button" key={icon} aria-label={icon}>
                    <RibbonIcon name={icon} />
                  </button>
                ))}
              </div>
              <button type="button" className="px-[2px] mt-[2px] leading-[12px] flex items-center gap-[3px]">
                {group.label} <Caret className="w-[4px] h-[4px]" />
              </button>
            </div>
          ))}
        </div>
      </div>
    </section>
  );
};

const PanelBar = ({ title, collapsible, glyph }) => (
  <div className="w-[228px] h-[18px] shrink-0 bg-[#f0f0f0] border border-[#e0e0e0] flex items-center px-1 text-[9px] text-[#444]">
    <span className="w-[14px] flex">
      {collapsible && (
        <svg className="w-[7px] h-[6px]" viewBox="0 0 8 6" fill="#333">
          <path d="M4 0v6L0 3zM8 0v6L4 3z" />
        </svg>
      )}
    </span>
    <h2 className="flex-1">{title}</h2>
    <button type="button" aria-label={`${title} options`} className="w-[6px] h-[6px] rounded-full bg-[#333] text-white flex items-center justify-center">
      {glyph && (
        <svg className="w-[4px] h-[4px]" viewBox="0 0 4 4" stroke="currentColor">
          <path d="M2 0v4M0 2h4" />
        </svg>
      )}
    </button>
    <span className="ml-[5px] w-px h-2 bg-[#777]" />
  </div>
);

const BrowserPanel = () => (
  <aside className="relative h-full w-[240px] flex flex-col pl-[3px] pt-1 pb-[5px] text-[9px] text-[#333]">
    <PanelBar title="BROWSER" collapsible />
    <div className="flex-1 min-h-0 flex mt-1 mb-[23px] pl-[3px]">
      <div className="w-[5px] bg-[#c6c6c6] rounded-full">
        <div className="h-[26%] bg-[#8c8c8c] rounded-full" />
      </div>
      <ul className="flex flex-col justify-between whitespace-nowrap">
        {TREE.map((row) => (
          <TreeRow key={`${row.label}-${row.depth}`} row={row} />
        ))}
      </ul>
    </div>
    <PanelBar title="COMMENTS" glyph />
  </aside>
);

const NAV_TOOLS = [
  { name: 'Orbit', caret: true, d: 'M6.500 1v11M4.500 3l2-2 2 2M4.500 10l2 2 2-2M1 6.500c3-3 8-3 11 0-3 3-8 3-11 0z' },
  { name: 'Look at', d: 'M2 6h9v6H2zM2 6l1.500-2h6L11 6M4 3V1M9 3V1M2 8h9' },
  { name: 'Pan', d: 'M4 12L1 7l1-1 2 2V3l1-1 1 1v3V2l1-1 1 1v4l.5-3 1-.5.5 1V9L9 12z' },
  { name: 'Zoom', d: 'M5 1.500a3.500 3.500 0 100 7 3.500 3.500 0 000-7zM7.500 8l4 4M9 2h4M11 0v4' },
  { name: 'Fit', caret: true, d: 'M1 3V1h2M5 1h2M9 1h3v2M1 5v2M1 9v3h2M6 3.500a3 3 0 100 6 3 3 0 000-6zM8.500 8.500l4 4' },
];

const NavBar = () => (
  <div className="bg-[#ededed] h-[18px] px-px flex items-center text-[#444]">
    {NAV_TOOLS.map((t) => (
      <button key={t.name} type="button" aria-label={t.name} className="flex items-center gap-[2px] px-1">
        <svg className="w-3 h-3" viewBox="0 0 13 13" fill="none" stroke="currentColor">
          <path d={t.d} />
        </svg>
        {t.caret && <Caret className="w-[4px] h-[4px]" />}
      </button>
    ))}
    <button type="button" aria-label="Display settings" className="flex items-center gap-[2px] pl-2 pr-[3px]">
      <svg className="w-3 h-3" viewBox="0 0 13 13">
        <path d="M1 2h11v7H1z" fill="#8fb0dc" stroke="#555" />
        <path d="M4 12h6" stroke="#555" />
      </svg>
      <Caret className="w-[4px] h-[4px]" />
    </button>
    <button type="button" aria-label="Grid and snaps" className="flex items-center gap-[2px] px-[3px]">
      <svg className="w-3 h-3" viewBox="0 0 13 13" stroke="#555" fill="none">
        <path d="M1 1.500h11M1 5h11M1 8.500h11M1 12h11M1.500 1v11M5 1v11M8.500 1v11M12 1v11" />
      </svg>
      <Caret className="w-[4px] h-[4px]" />
    </button>
    <button type="button" aria-label="Viewports" className="flex items-center gap-[2px] px-[3px]">
      <svg className="w-3 h-3" viewBox="0 0 13 13" stroke="#466" fill="#8fb0dc">
        <path d="M1 2h11v9H1zM6.500 2v9M1 6.500h11" />
      </svg>
      <Caret className="w-[4px] h-[4px]" />
    </button>
  </div>
);

/* ---------- timeline ---------- */

const PLAYBACK = [
  { name: 'Go to start', d: 'M1 1h1.500v10H1zM10 1v10L3 6z' },
  { name: 'Step back', d: 'M7 1.500v9L1 6zM8 3h1v6H8z' },
  { name: 'Play', d: 'M2 1l9 5-9 5z' },
  { name: 'Step forward', d: 'M5 1.500v9L11 6zM3 3h1v6H3z' },
  { name: 'Go to end', d: 'M2 1v10l7-5zM10 1h1.500v10H10z' },
];

const Timeline = () => (
  <footer className="h-[34px] bg-[#f0f0f0] border-t border-[#c4c4c4] flex">
    <div className="w-[107px] shrink-0 flex items-center gap-[7px] pl-[7px] pt-[6px] text-[#333]">
      {PLAYBACK.map((p) => (
        <button key={p.name} type="button" aria-label={p.name}>
          <svg className="w-3 h-3" viewBox="0 0 12 12" fill="currentColor">
            <path d={p.d} />
          </svg>
        </button>
      ))}
    </div>
    <div className="flex-1 min-w-0 flex flex-col">
      <div className="h-[5px] shrink-0 flex">
        <div className="w-[11%]" />
        <div className="w-[22%] bg-[#c2c2c2] rounded-full" />
      </div>
      <div className="flex border-b border-[#b5b5b5]">
        {TIMELINE.map((group, i) => (
          <div key={i} className="basis-0 min-w-0" style={{ flexGrow: group.items.length }}>
            <div className={`h-1 ml-[2px] mr-px ${COLORS[group.color]}`} />
            <div className="flex">
              {group.items.map((item, j) => (
                <div key={j} className="flex-1 min-w-0 flex flex-col items-center">
                  {item === 'extrudeActive' ? (
                    <span className="bg-[#cfcfcf] rounded-xs"><SmallIcon name="extrude" /></span>
                  ) : (
                    <SmallIcon name={item} />
                  )}
                  <span className="relative w-px h-1 bg-[#aaa]">
                    {item === 'linear' && (
                      <svg className="absolute top-0 -left-[3px] w-[7px] h-[8px]" viewBox="0 0 7 8">
                        <path d="M.5.5h6v7h-6z" fill="#fff" stroke="#222" />
                        <path d="M3.500 2v4M2 4h3" stroke="#222" />
                      </svg>
                    )}
                  </span>
                </div>
              ))}
            </div>
          </div>
        ))}
      </div>
    </div>
    <button type="button" aria-label="Timeline settings" className="w-[38px] shrink-0 flex items-center justify-center pl-3 pt-[6px] text-[#777]">
      <GearIcon className="w-3 h-3" />
    </button>
  </footer>
);

/* ---------- parameters dialog ---------- */

const PARAMS = [
  { kind: 'band', height: 'h-[30px]' },
  { name: 'RingH', unit: 'mm', expr: '8.1 mm' },
  { name: 'RingDo', unit: 'mm', expr: '45.3', editing: true },
  { name: 'RingDi', unit: 'mm', expr: '23 mm', busy: true },
  { name: 'Tolerence', unit: 'mm', expr: '1 mm' },
  { kind: 'band', height: 'h-[16px]' },
  { kind: 'blank', height: 'h-[15px]' },
  { kind: 'blank', height: 'h-[15px]' },
  { name: 'd343', unit: 'mm', expr: '2.8 mm', line: true },
  { kind: 'blank', height: 'h-[46px]' },
  { kind: 'blank', height: 'h-[15px]' },
  { kind: 'blank', height: 'h-[15px]' },
  { kind: 'blank', height: 'h-[15px]' },
  { kind: 'blank', height: 'h-[7px]' },
];

const BusyCursor = () => (
  <svg className="absolute left-[17px] -top-px w-4 h-4" viewBox="0 0 16 16">
    <path d="M8 8L8 0A8 8 0 0114 3z" fill="#fbc12f" />
    <path d="M8 8L14 3A8 8 0 0116 9z" fill="#fb9a1e" />
    <path d="M8 8L16 9A8 8 0 0112 15z" fill="#f2662b" />
    <path d="M8 8L12 15A8 8 0 016 15.700z" fill="#e8344f" />
    <path d="M8 8L6 15.700A8 8 0 011 12z" fill="#b458c8" />
    <path d="M8 8L1 12A8 8 0 01.500 5z" fill="#4b8fe6" />
    <path d="M8 8L.500 5A8 8 0 014 1z" fill="#4cc3c0" />
    <path d="M8 8L4 1A8 8 0 018 0z" fill="#a6cf4a" />
  </svg>
);

const ParamRow = ({ row }) => {
  if (row.kind) {
    const cell = row.kind === 'band' ? 'bg-[#d0d0d0] border-r border-[#c4c4c4]' : 'border-r border-b border-[#e2e2e2]';
    return (
      <tr className={row.height}>
        <td className={cell} />
        <td className={cell} />
        <td className={cell} />
      </tr>
    );
  }
  const line = row.line ? 'border-b border-b-[#e2e2e2]' : '';
  const divider = row.editing || row.line ? 'border-r border-r-[#e2e2e2]' : 'border-r border-r-[#f4f4f4]';
  return (
    <tr className={row.editing ? 'h-[15px] bg-[#0560dc] text-white' : 'h-[15px]'}>
      <td className={`pl-[3px] ${divider} ${line}`}>{row.name}</td>
      <td className={`pl-1 ${divider} ${line}`}>{row.unit}</td>
      <td className={row.editing ? '' : `pl-1 ${line}`}>
        {row.editing ? (
          <input
            aria-label={`${row.name} expression`}
            defaultValue={row.expr}
            className="block w-full h-[15px] px-px bg-white text-black border border-[#1b5cb5] outline-none"
          />
        ) : (
          <span className="relative">
            {row.expr}
            {row.busy && <BusyCursor />}
          </span>
        )}
      </td>
    </tr>
  );
};

const ParametersDialog = () => (
  <section
    role="dialog"
    aria-labelledby="params-title"
    className="absolute top-[105px] right-5 w-[365px] bg-[#ececec] rounded-t border border-[#bbb] shadow-lg font-['Inter',sans-serif] text-[10px] leading-[14px] text-black"
  >
    <header className="h-3 rounded-t bg-linear-to-b from-[#e2e2e2] to-[#d0d0d0] border-b border-[#b8b8b8] flex items-center px-1">
      <div className="flex-1 flex gap-[5px]">
        <span className="w-[9px] h-[9px] rounded-full bg-[#f25e57]" />
        <span className="w-[9px] h-[9px] rounded-full border border-[#c6c6c6]" />
        <span className="w-[9px] h-[9px] rounded-full bg-[#3cc14e]" />
      </div>
      <h2 id="params-title" className="text-[9px] leading-[10px] text-[#444]">Parameters</h2>
      <div className="flex-1" />
    </header>
    <div className="mx-[15px] mt-3 border border-[#c8c8c8] bg-white flex">
      <div className="flex-1">
        <table className="w-full table-fixed border-separate border-spacing-0">
          <thead>
            <tr className="h-[15px] bg-[#ececec] text-left">
              <th className="w-[90px] pl-[2px] border-r border-[#d0d0d0]">Name</th>
              <th className="w-[53px] pl-[3px] border-r border-[#d0d0d0]">Unit</th>
              <th className="pl-[3px] border-r border-[#d0d0d0]">Expression</th>
            </tr>
          </thead>
          <tbody>
            {PARAMS.map((row, i) => (
              <ParamRow key={i} row={row} />
            ))}
          </tbody>
        </table>
        <div className="h-3 bg-[#fafafa] flex items-center">
          <div className="ml-[16%] w-[53%] h-[6px] rounded-full bg-[#8a8a8a]" />
        </div>
      </div>
      <div className="w-[11px] bg-[#fafafa] border-l border-[#e0e0e0] flex justify-center pt-[2px]">
        <div className="w-[6px] h-[105px] rounded-full bg-[#bfbfbf]" />
      </div>
    </div>
    <div className="flex justify-end pr-[21px] pt-[14px] pb-[21px]">
      <button type="button" className="w-[52px] h-[15px] rounded-xs bg-linear-to-b from-[#63a2fb] to-[#0f66f5] text-[10px] leading-[15px]">
        OK
      </button>
    </div>
  </section>
);

export default function App() {
  return (
    <div className="relative h-screen min-h-[640px] overflow-hidden flex flex-col bg-[#14213b] font-['Open_Sans',sans-serif]">
      <MenuBar />
      <div className="flex-1 min-h-0 flex flex-col ml-1">
        <TitleBar />
        <TabBar />
        <Ribbon />
        <main className="relative flex-1 min-h-0 bg-white overflow-hidden">
          <Viewport />
          <BrowserPanel />
          <div className="absolute bottom-[6px] inset-x-0 flex justify-center">
            <NavBar />
          </div>
        </main>
        <Timeline />
      </div>
      <ParametersDialog />
    </div>
  );
}
